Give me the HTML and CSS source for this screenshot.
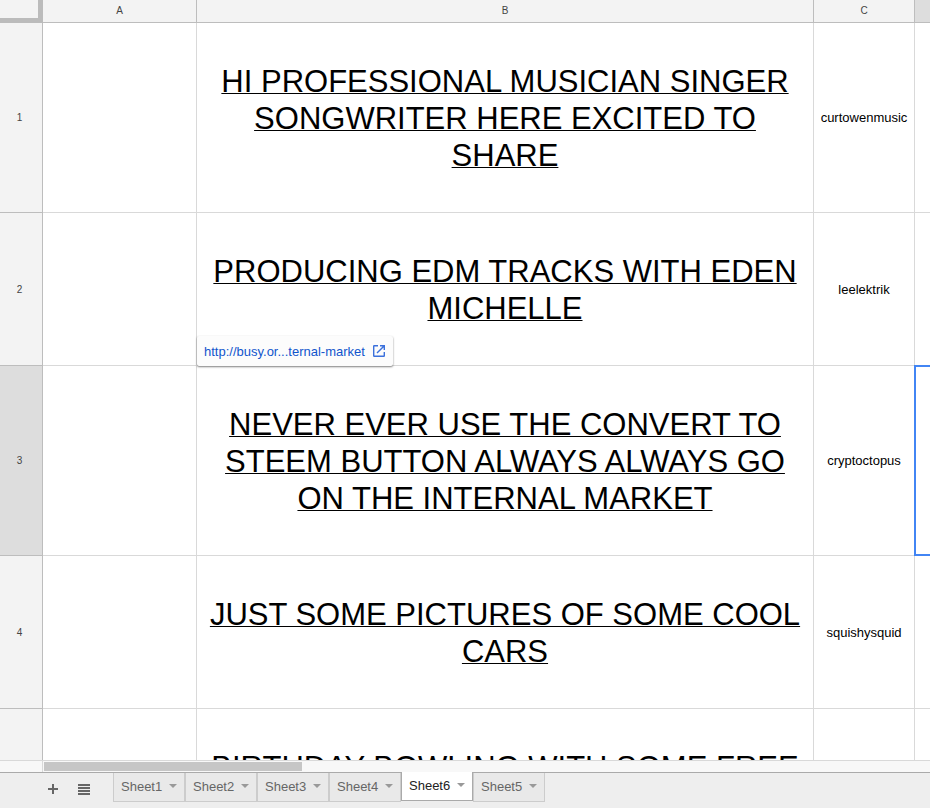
FILE: index.html
```html
<!DOCTYPE html>
<html lang="en">
<head>
  <meta charset="UTF-8">
  <meta name="viewport" content="width=device-width, initial-scale=1.0">
  <title>Sheet6</title>
  <link rel="stylesheet" href="styles.css">
</head>
<body>
  <main class="grid">
    <table class="sheet">
      <colgroup>
        <col class="col-num">
        <col class="col-a">
        <col class="col-b">
        <col class="col-c">
        <col>
      </colgroup>
      <thead>
        <tr>
          <th class="corner"></th>
          <th>A</th>
          <th>B</th>
          <th>C</th>
          <th class="on"></th>
        </tr>
      </thead>
      <tbody>
        <tr>
          <th>1</th>
          <td></td>
          <td class="title"><a href="#">HI PROFESSIONAL MUSICIAN SINGER SONGWRITER HERE EXCITED TO SHARE</a></td>
          <td class="author">curtowenmusic</td>
          <td></td>
        </tr>
        <tr>
          <th>2</th>
          <td></td>
          <td class="title"><a href="#">PRODUCING EDM TRACKS WITH EDEN MICHELLE</a></td>
          <td class="author">leelektrik</td>
          <td></td>
        </tr>
        <tr>
          <th class="on">3</th>
          <td></td>
          <td class="title">
            <a href="#">NEVER EVER USE THE CONVERT TO STEEM BUTTON ALWAYS ALWAYS GO ON THE INTERNAL MARKET</a>
            <!-- link bubble -->
            <a class="bubble" href="#">
              http://busy.or...ternal-market
              <svg width="12" height="12" viewBox="0 0 12 12" fill="none" stroke="#3b70dc" stroke-width="1.4">
                <path d="M5 .7H1.3Q.7 .7 .7 1.3V10.7Q.7 11.3 1.3 11.3H10.7Q11.3 11.3 11.3 10.7V7"/>
                <path d="M7 .7H11.3V5M11.3 .7L4 8"/>
              </svg>
            </a>
          </td>
          <td class="author">cryptoctopus</td>
          <td class="selected"></td>
        </tr>
        <tr>
          <th>4</th>
          <td></td>
          <td class="title"><a href="#">JUST SOME PICTURES OF SOME COOL CARS</a></td>
          <td class="author">squishysquid</td>
          <td></td>
        </tr>
        <tr>
          <th></th>
          <td></td>
          <td class="title"><a href="#">BIRTHDAY BOWLING WITH SOME FREE</a></td>
          <td></td>
          <td></td>
        </tr>
      </tbody>
    </table>
  </main>

  <div class="scroll">
    <div class="track"><div class="thumb"></div></div>
  </div>

  <footer class="bar">
    <button class="tool" type="button" aria-label="Add sheet">
      <svg width="10" height="10" viewBox="0 0 10 10"><path d="M4 0h2v4h4v2H6v4H4V6H0V4h4z" fill="#666"/></svg>
    </button>
    <button class="tool" type="button" aria-label="All sheets">
      <svg width="12" height="11" viewBox="0 0 12 11"><path d="M0 0h12v2H0zM0 3h12v2H0zM0 6h12v2H0zM0 9h12v2H0z" fill="#666"/></svg>
    </button>
    <nav class="tabs">
      <button class="tab" type="button">Sheet1</button>
      <button class="tab" type="button">Sheet2</button>
      <button class="tab" type="button">Sheet3</button>
      <button class="tab" type="button">Sheet4</button>
      <button class="tab active" type="button">Sheet6</button>
      <button class="tab" type="button">Sheet5</button>
    </nav>
  </footer>
</body>
</html>
```
FILE: styles.css
```css
*{margin: 0; padding: 0; box-sizing: border-box;}
body{
  height: 100vh;
  display: flex;
  flex-direction: column;
  overflow: hidden;
  background: #fff;
  font-family: "Liberation Sans", Arial, sans-serif;
  font-size: 13px;
  color: #000;
}

/* sheet */
.grid{
  flex: 1;
  min-height: 0;
  overflow: hidden;
}
.sheet{
  width: 100%;
  table-layout: fixed;
  border-collapse: separate;
  border-spacing: 0;
}
.col-num{width: 43px;}
.col-a{width: 154px;}
.col-b{width: 617px;}
.col-c{width: 101px;}

th{
  background: #f3f3f3;
  border-right: 1px solid #bdbdbd;
  border-bottom: 1px solid #bdbdbd;
  font-size: 10px;
  font-weight: normal;
  color: #444;
}
thead th{
  height: 23px;
  padding-bottom: 2px;
}
tbody th{padding-right: 3px;}
th.on{background: #ddd;}
.corner{
  border-right: 5px solid #bbb;
  border-bottom: 5px solid #bbb;
}
td{
  position: relative;
  border-right: 1px solid #d9d9d9;
  border-bottom: 1px solid #d9d9d9;
  text-align: center;
  vertical-align: middle;
}
th:last-child, td:last-child{border-right: 0;}
.title{
  padding: 40px 3px 38px;
  font-size: 31px;
  line-height: 37px;
}
.title a{
  color: #000;
  text-decoration-thickness: 1px;
}

.selected::after{
  content: "";
  position: absolute;
  inset: -1px -4px -1px -1px;
  border: 2px solid #4285f4;
}

.title .bubble{
  position: absolute;
  left: 0;
  bottom: 100%;
  display: flex;
  align-items: center;
  gap: 8px;
  height: 30px;
  padding: 0 8px 0 7px;
  background: #fcfcfc;
  border-radius: 2px;
  box-shadow: 0 1px 2px rgba(0,0,0,.5);
  color: #15c;
  font-size: 13px;
  line-height: 15px;
  text-decoration: none;
  white-space: nowrap;
}

/* horizontal scrollbar */
.scroll{
  height: 12px;
  padding-left: 42px;
  background: #f8f8f8;
  border-top: 1px solid #d9d9d9;
}
.track{
  height: 100%;
  padding: 1px;
  border-left: 1px solid #d9d9d9;
}
.thumb{
  width: 258px;
  height: 9px;
  background: #c6c6c6;
}

/* bottom bar */
.bar{
  display: flex;
  align-items: flex-start;
  height: 36px;
  padding-left: 37px;
  background: #eee;
  border-top: 1px solid #aaa;
}
.tool{
  display: flex;
  align-items: center;
  justify-content: center;
  width: 31px;
  height: 32px;
  background: none;
  border: 0;
}
.tabs{
  display: flex;
  margin-left: 14px;
}
.tab{
  display: flex;
  align-items: center;
  justify-content: space-between;
  width: 72px;
  height: 29px;
  padding: 0 7px 2px;
  background: #e9e9e9;
  border: 1px solid #ccc;
  border-top: 0;
  font: 13px "Liberation Sans", Arial, sans-serif;
  color: #666;
}
.tab::after{
  content: "";
  border: 4px solid transparent;
  border-top-color: #999;
  border-bottom: 0;
}
.tab.active{
  margin-top: -1px;
  background: #fff;
  border-color: #aaa;
  color: #222;
}
```
